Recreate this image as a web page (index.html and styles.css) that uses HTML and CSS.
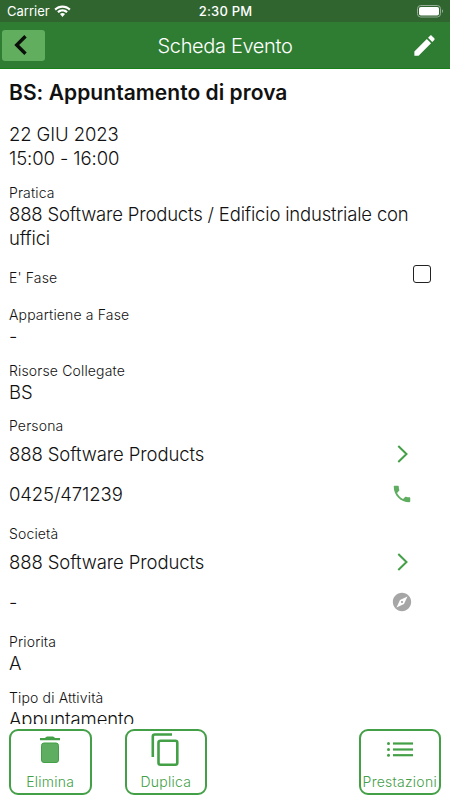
FILE: index.html
```html
<!DOCTYPE html>
<html lang="it">
<head>
  <meta charset="UTF-8" />
  <meta name="viewport" content="width=device-width, initial-scale=1.0"/>
  <title>Scheda Evento</title>
  <link rel="stylesheet" href="styles.css">
</head>
<body>
  <div class="status-bar">
    <div class="carrier">
      <span class="carrier-name">Carrier</span>
      <svg width="17" height="13" viewBox="0 0 17 13" fill="#fff">
        <path d="M8.5 0.5C5.4 0.5 2.6 1.7 0.4 3.8L1.9 5.4C3.7 3.7 6 2.7 8.5 2.7s4.8 1 6.6 2.7l1.5-1.6C14.4 1.7 11.6.5 8.5.5z"/>
        <path d="M8.5 4.2c-2 0-3.9.8-5.3 2.2l1.5 1.6c1-1 2.3-1.6 3.8-1.6s2.8.6 3.8 1.6l1.5-1.6C12.4 5 10.5 4.2 8.5 4.2z"/>
        <path d="M8.5 8c-1 0-1.9.4-2.5 1.1l2.5 2.8 2.5-2.8C10.4 8.4 9.5 8 8.5 8z"/>
      </svg>
    </div>
    <span class="clock">2:30 PM</span>
    <svg class="battery" width="27" height="13" viewBox="0 0 27 13">
      <rect x="0.5" y="0.5" width="23" height="11.5" rx="3.2" fill="none" stroke="#95ad95"/>
      <rect x="2" y="2" width="20" height="8.5" rx="1.8" fill="#fff"/>
      <path d="M25 4.3c1.4.5 1.4 3.2 0 3.7z" fill="#95ad95"/>
    </svg>
  </div>

  <header class="navbar">
    <button class="back-btn" aria-label="Indietro">
      <svg width="14" height="20" viewBox="0 0 14 20"><path d="M12.5 1.2L3.7 10L12.5 18.8" fill="none" stroke="#0a0f0a" stroke-width="3.4"/></svg>
    </button>
    <h1>Scheda Evento</h1>
    <button class="edit-btn" aria-label="Modifica">
      <svg width="27" height="27" viewBox="0 0 24 24" fill="#fff"><path d="M3 17.25V21h3.75L17.81 9.94l-3.75-3.75L3 17.25zM20.71 7.04c.39-.39.39-1.02 0-1.41l-2.34-2.34c-.39-.39-1.02-.39-1.41 0l-1.83 1.83 3.75 3.75 1.83-1.83z"/></svg>
    </button>
  </header>

  <main class="content">
    <h2>BS: Appuntamento di prova</h2>

    <div class="date">
      <p>22 GIU 2023</p>
      <p>15:00 - 16:00</p>
    </div>

    <div class="field">
      <label>Pratica</label>
      <p class="long">888 Software Products / Edificio industriale con uffici</p>
    </div>

    <div class="field-check">
      <label>E' Fase</label>
      <span class="checkbox"></span>
    </div>

    <div class="field">
      <label>Appartiene a Fase</label>
      <p>-</p>
    </div>

    <div class="field">
      <label>Risorse Collegate</label>
      <p>BS</p>
    </div>

    <div class="contact">
      <label>Persona</label>
      <div class="contact-row">
        <p>888 Software Products</p>
        <svg width="20" height="20" viewBox="0 0 20 20"><path d="M5.3 2L13.5 10L5.3 18" fill="none" stroke="#43a047" stroke-width="2"/></svg>
      </div>
      <div class="contact-row">
        <p>0425/471239</p>
        <svg width="22" height="22" viewBox="0 0 24 24" fill="#5fad61"><path d="M6.62 10.79c1.44 2.83 3.76 5.14 6.59 6.59l2.2-2.2c.27-.27.67-.36 1.02-.24 1.12.37 2.33.57 3.57.57.55 0 1 .45 1 1V20c0 .55-.45 1-1 1-9.39 0-17-7.61-17-17 0-.55.45-1 1-1h3.5c.55 0 1 .45 1 1 0 1.25.2 2.45.57 3.57.11.35.03.74-.25 1.02l-2.2 2.2z"/></svg>
      </div>
    </div>

    <div class="contact">
      <label>Società</label>
      <div class="contact-row">
        <p>888 Software Products</p>
        <svg width="20" height="20" viewBox="0 0 20 20"><path d="M5.3 2L13.5 10L5.3 18" fill="none" stroke="#43a047" stroke-width="2"/></svg>
      </div>
      <div class="contact-row">
        <p>-</p>
        <svg width="22" height="22" viewBox="0 0 24 24" fill="#a6a6a6"><path d="M12 10.9c-.61 0-1.1.49-1.1 1.1s.49 1.1 1.1 1.1c.61 0 1.1-.49 1.1-1.1s-.49-1.1-1.1-1.1zM12 2C6.48 2 2 6.48 2 12s4.48 10 10 10 10-4.48 10-10S17.52 2 12 2zm2.19 12.19L6 18l3.81-8.19L18 6l-3.81 8.19z"/></svg>
      </div>
    </div>

    <div class="field">
      <label>Priorita</label>
      <p>A</p>
    </div>

    <div class="field">
      <label>Tipo di Attività</label>
      <p>Appuntamento</p>
    </div>
  </main>

  <footer class="toolbar">
    <button class="tool-btn">
      <svg width="36" height="36" viewBox="0 0 36 36">
        <rect x="9.5" y="12" width="17" height="19.5" rx="2.5" fill="#5fad61" stroke="#43a047"/>
        <path d="M8 7h5c1-1.5 2-1.5 3-1.500h4c1 0 2 0 3 1.500h5v2.200H8z" fill="#43a047"/>
      </svg>
      <span>Elimina</span>
    </button>
    <button class="tool-btn">
      <svg width="36" height="36" viewBox="0 0 36 36" fill="none" stroke="#43a047" stroke-width="2.6">
        <path d="M4.800 26V5.500a2 2 0 0 1 2-2H24"/>
        <rect x="10.500" y="9.800" width="18.800" height="24" rx="2"/>
      </svg>
      <span>Duplica</span>
    </button>
    <button class="tool-btn tool-last">
      <svg width="36" height="36" viewBox="0 0 36 36" fill="#43a047">
        <circle cx="6.5" cy="12.5" r="1.5"/><rect x="11" y="11.4" width="20" height="2.2"/>
        <circle cx="6.5" cy="18.5" r="1.5"/><rect x="11" y="17.4" width="20" height="2.2"/>
        <circle cx="6.5" cy="24.2" r="1.5"/><rect x="11" y="23.1" width="20" height="2.2"/>
      </svg>
      <span>Prestazioni</span>
    </button>
  </footer>
</body>
</html>
```
FILE: styles.css
```css
* {
  box-sizing: border-box;
}

body {
  font-family: Inter, "Liberation Sans", sans-serif;
  margin: 0;
  height: 100vh;
  display: flex;
  flex-direction: column;
  overflow: hidden;
  background: #fff;
  color: #111;
}

h1, h2, p {
  margin: 0;
}

button {
  font-family: inherit;
  padding: 0;
  border: none;
  background: none;
}

svg {
  display: block;
  flex: none;
}

.status-bar {
  height: 22px;
  flex: none;
  display: grid;
  grid-template-columns: 1fr auto 1fr;
  align-items: center;
  padding: 0 6px 0 7px;
  background: #306530;
  color: #fff;
  font-size: 13px;
}

.carrier {
  display: flex;
  align-items: center;
  gap: 4px;
}

.clock {
  font-weight: 500;
  letter-spacing: 0.2px;
}

.battery {
  justify-self: end;
}

.navbar {
  height: 47px;
  flex: none;
  display: grid;
  grid-template-columns: 1fr auto 1fr;
  align-items: center;
  padding: 0 12px 0 2px;
  background: #2f7d32;
  border-bottom: 1px solid #178017;
}

.navbar h1 {
  color: #fff;
  font-size: 20px;
  font-weight: 300;
  padding: 2px 0 0 10px;
  letter-spacing: -0.35px;
}

.back-btn {
  width: 43px;
  height: 31px;
  padding-left: 11px;
  border-radius: 3px;
  background: #60ae5e;
}

.edit-btn {
  justify-self: end;
}

.content {
  flex: 1;
  min-height: 0;
  overflow: hidden;
  padding: 12px 9px 0;
}

.content h2 {
  font-size: 21px;
  font-weight: 600;
  line-height: 24px;
  letter-spacing: 0.05px;
  margin-bottom: 17px;
}

.content p {
  font-size: 18.5px;
  font-weight: 350;
  line-height: 24px;
  letter-spacing: -0.1px;
  padding-top: 1px;
}

.content .long {
  letter-spacing: -0.18px;
}

.content label {
  display: block;
  font-size: 14px;
  font-weight: 350;
  line-height: 17px;
  letter-spacing: 0.15px;
}

.date {
  margin-bottom: 14px;
}

.content .date p {
  padding-top: 0;
}

.field {
  margin-bottom: 13.4px;
}

.field-check {
  display: flex;
  align-items: center;
  justify-content: space-between;
  height: 26px;
  padding-right: 10px;
  margin: 14.4px 0 16px;
}

.checkbox {
  width: 18px;
  height: 18px;
  border: 1.5px solid #222;
  border-radius: 3px;
  margin-bottom: 6px;
}

.contact {
  margin-bottom: 11px;
}

.contact-row {
  height: 40px;
  display: flex;
  align-items: center;
  justify-content: space-between;
  padding-right: 28px;
}

.content .contact-row p {
  padding: 0 0 1px;
}

.toolbar {
  height: 76px;
  flex: none;
  display: flex;
  gap: 33px;
  padding: 5px 9px 0;
}

.tool-btn {
  width: 82.5px;
  height: 65.5px;
  display: flex;
  flex-direction: column;
  align-items: center;
  border: 2px solid #43a047;
  border-radius: 9px;
  color: #43a047;
  font-size: 14px;
  font-weight: 300;
  letter-spacing: 0.25px;
}

.tool-btn span {
  line-height: 17px;
  margin-top: 6px;
}

.tool-last {
  margin-left: auto;
}
```
